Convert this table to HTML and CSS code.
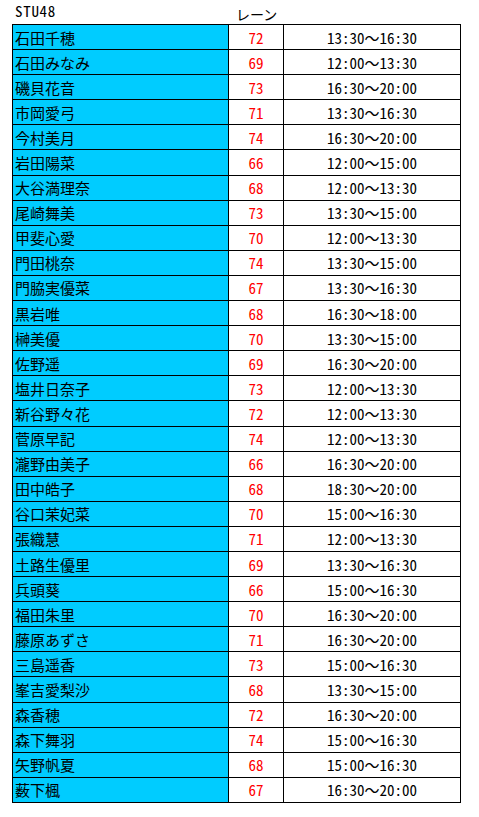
FILE: index.html
```html
<!DOCTYPE html>
<html lang="ja">
<head>
<meta charset="utf-8">
<link rel="stylesheet" href="styles.css">
</head>
<body>
<div class="sheet">
  <div class="head">
    <div class="title">STU48</div>
    <div class="lane-head">レーン</div>
  </div>
  <table class="grid">
    <colgroup><col class="c1"><col class="c2"><col class="c3"></colgroup>
    <tbody>
      <tr><td class="name">石田千穂</td><td class="lane">72</td><td class="time">13:30<span class="wave">〜</span>16:30</td></tr>
      <tr><td class="name">石田みなみ</td><td class="lane">69</td><td class="time">12:00<span class="wave">〜</span>13:30</td></tr>
      <tr><td class="name">磯貝花音</td><td class="lane">73</td><td class="time">16:30<span class="wave">〜</span>20:00</td></tr>
      <tr><td class="name">市岡愛弓</td><td class="lane">71</td><td class="time">13:30<span class="wave">〜</span>16:30</td></tr>
      <tr><td class="name">今村美月</td><td class="lane">74</td><td class="time">16:30<span class="wave">〜</span>20:00</td></tr>
      <tr><td class="name">岩田陽菜</td><td class="lane">66</td><td class="time">12:00<span class="wave">〜</span>15:00</td></tr>
      <tr><td class="name">大谷満理奈</td><td class="lane">68</td><td class="time">12:00<span class="wave">〜</span>13:30</td></tr>
      <tr><td class="name">尾崎舞美</td><td class="lane">73</td><td class="time">13:30<span class="wave">〜</span>15:00</td></tr>
      <tr><td class="name">甲斐心愛</td><td class="lane">70</td><td class="time">12:00<span class="wave">〜</span>13:30</td></tr>
      <tr><td class="name">門田桃奈</td><td class="lane">74</td><td class="time">13:30<span class="wave">〜</span>15:00</td></tr>
      <tr><td class="name">門脇実優菜</td><td class="lane">67</td><td class="time">13:30<span class="wave">〜</span>16:30</td></tr>
      <tr><td class="name">黒岩唯</td><td class="lane">68</td><td class="time">16:30<span class="wave">〜</span>18:00</td></tr>
      <tr><td class="name">榊美優</td><td class="lane">70</td><td class="time">13:30<span class="wave">〜</span>15:00</td></tr>
      <tr><td class="name">佐野遥</td><td class="lane">69</td><td class="time">16:30<span class="wave">〜</span>20:00</td></tr>
      <tr><td class="name">塩井日奈子</td><td class="lane">73</td><td class="time">12:00<span class="wave">〜</span>13:30</td></tr>
      <tr><td class="name">新谷野々花</td><td class="lane">72</td><td class="time">12:00<span class="wave">〜</span>13:30</td></tr>
      <tr><td class="name">菅原早記</td><td class="lane">74</td><td class="time">12:00<span class="wave">〜</span>13:30</td></tr>
      <tr><td class="name">瀧野由美子</td><td class="lane">66</td><td class="time">16:30<span class="wave">〜</span>20:00</td></tr>
      <tr><td class="name">田中皓子</td><td class="lane">68</td><td class="time">18:30<span class="wave">〜</span>20:00</td></tr>
      <tr><td class="name">谷口茉妃菜</td><td class="lane">70</td><td class="time">15:00<span class="wave">〜</span>16:30</td></tr>
      <tr><td class="name">張織慧</td><td class="lane">71</td><td class="time">12:00<span class="wave">〜</span>13:30</td></tr>
      <tr><td class="name">土路生優里</td><td class="lane">69</td><td class="time">13:30<span class="wave">〜</span>16:30</td></tr>
      <tr><td class="name">兵頭葵</td><td class="lane">66</td><td class="time">15:00<span class="wave">〜</span>16:30</td></tr>
      <tr><td class="name">福田朱里</td><td class="lane">70</td><td class="time">16:30<span class="wave">〜</span>20:00</td></tr>
      <tr><td class="name">藤原あずさ</td><td class="lane">71</td><td class="time">16:30<span class="wave">〜</span>20:00</td></tr>
      <tr><td class="name">三島遥香</td><td class="lane">73</td><td class="time">15:00<span class="wave">〜</span>16:30</td></tr>
      <tr><td class="name">峯吉愛梨沙</td><td class="lane">68</td><td class="time">13:30<span class="wave">〜</span>15:00</td></tr>
      <tr><td class="name">森香穂</td><td class="lane">72</td><td class="time">16:30<span class="wave">〜</span>20:00</td></tr>
      <tr><td class="name">森下舞羽</td><td class="lane">74</td><td class="time">15:00<span class="wave">〜</span>16:30</td></tr>
      <tr><td class="name">矢野帆夏</td><td class="lane">68</td><td class="time">15:00<span class="wave">〜</span>16:30</td></tr>
      <tr><td class="name">薮下楓</td><td class="lane">67</td><td class="time">16:30<span class="wave">〜</span>20:00</td></tr>
    </tbody>
  </table>
</div>
</body>
</html>
```

FILE: styles.css
```css
html, body {
  margin: 0;
  padding: 0;
  background: #ffffff;
}
body {
  font-family: "Noto Sans CJK JP", "Noto Sans", sans-serif;
  color: #000;
}
.sheet {
  padding: 0 0 0 12px;
}
.head {
  height: 24px;
  display: flex;
  align-items: flex-start;
}
.title {
  width: 221px;
  padding-left: 3px;
  line-height: normal;
  font-size: 15px;
  letter-spacing: 0.7px;
  font-feature-settings: "hwid";
}
.lane-head {
  line-height: 18px;
  padding-top: 5px;
  font-size: 14px;
}
.grid {
  border-collapse: collapse;
  table-layout: fixed;
  width: 448px;
  font-size: 15px;
}
.c1 { width: 216px; }
.c2 { width: 55px; }
.c3 { width: 177px; }
.grid td {
  border: 1px solid #000;
  height: 24.1px;
  padding: 0;
  line-height: 1;
  white-space: nowrap;
}
.name {
  background: #00ccff;
  padding-left: 2px !important;
  text-align: left;
}
.lane {
  color: #ff0000;
  text-align: center;
  font-feature-settings: "hwid";
}
.time {
  text-align: center;
  font-feature-settings: "hwid";
}
.wave {
  font-feature-settings: normal;
}
```
